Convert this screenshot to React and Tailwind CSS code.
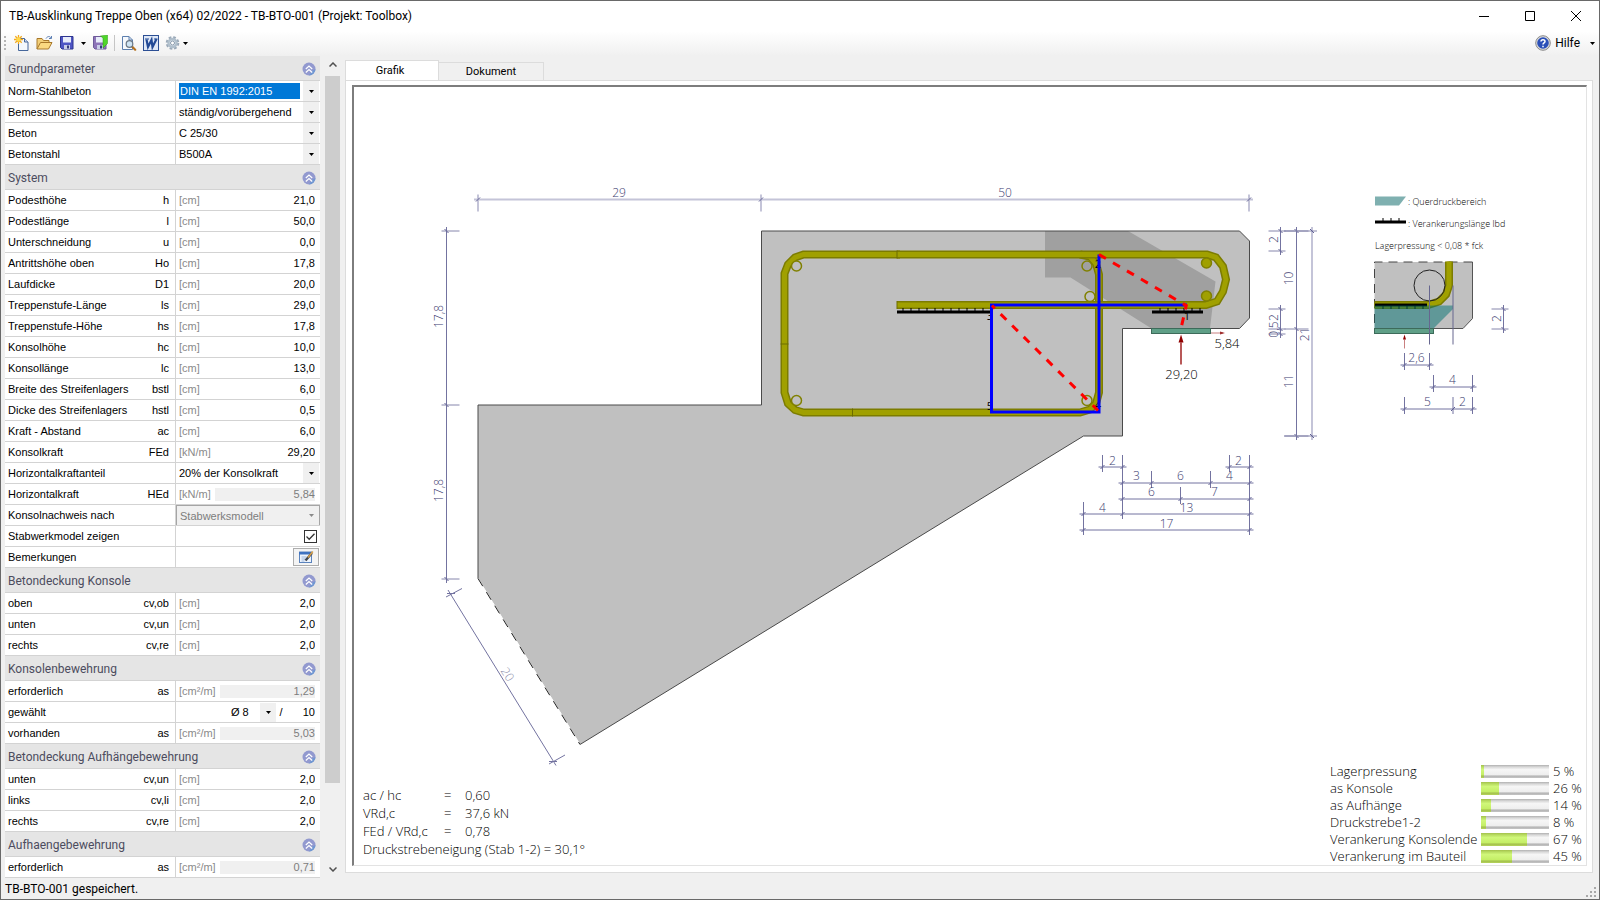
import { useState } from "react";

const sections = [
  {
    title: "Grundparameter",
    rows: [
      { label: "Norm-Stahlbeton", select: "DIN EN 1992:2015", active: true },
      { label: "Bemessungssituation", select: "ständig/vorübergehend" },
      { label: "Beton", select: "C 25/30" },
      { label: "Betonstahl", select: "B500A" },
    ],
  },
  {
    title: "System",
    rows: [
      { label: "Podesthöhe", symbol: "h", unit: "[cm]", value: "21,0" },
      { label: "Podestlänge", symbol: "l", unit: "[cm]", value: "50,0" },
      { label: "Unterschneidung", symbol: "u", unit: "[cm]", value: "0,0" },
      { label: "Antrittshöhe oben", symbol: "Ho", unit: "[cm]", value: "17,8" },
      { label: "Laufdicke", symbol: "D1", unit: "[cm]", value: "20,0" },
      { label: "Treppenstufe-Länge", symbol: "ls", unit: "[cm]", value: "29,0" },
      { label: "Treppenstufe-Höhe", symbol: "hs", unit: "[cm]", value: "17,8" },
      { label: "Konsolhöhe", symbol: "hc", unit: "[cm]", value: "10,0" },
      { label: "Konsollänge", symbol: "lc", unit: "[cm]", value: "13,0" },
      { label: "Breite des Streifenlagers", symbol: "bstl", unit: "[cm]", value: "6,0" },
      { label: "Dicke des Streifenlagers", symbol: "hstl", unit: "[cm]", value: "0,5" },
      { label: "Kraft - Abstand", symbol: "ac", unit: "[cm]", value: "6,0" },
      { label: "Konsolkraft", symbol: "FEd", unit: "[kN/m]", value: "29,20" },
      { label: "Horizontalkraftanteil", select: "20% der Konsolkraft" },
      { label: "Horizontalkraft", symbol: "HEd", unit: "[kN/m]", value: "5,84", readOnly: true },
      { label: "Konsolnachweis nach", select: "Stabwerksmodell", disabled: true },
      { label: "Stabwerkmodel zeigen", checkbox: true },
      { label: "Bemerkungen", note: true },
    ],
  },
  {
    title: "Betondeckung Konsole",
    rows: [
      { label: "oben", symbol: "cv,ob", unit: "[cm]", value: "2,0" },
      { label: "unten", symbol: "cv,un", unit: "[cm]", value: "2,0" },
      { label: "rechts", symbol: "cv,re", unit: "[cm]", value: "2,0" },
    ],
  },
  {
    title: "Konsolenbewehrung",
    rows: [
      { label: "erforderlich", symbol: "as", unit: "[cm²/m]", value: "1,29", readOnly: true },
      { label: "gewählt", diameter: "Ø 8", value: "10" },
      { label: "vorhanden", symbol: "as", unit: "[cm²/m]", value: "5,03", readOnly: true },
    ],
  },
  {
    title: "Betondeckung Aufhängebewehrung",
    rows: [
      { label: "unten", symbol: "cv,un", unit: "[cm]", value: "2,0" },
      { label: "links", symbol: "cv,li", unit: "[cm]", value: "2,0" },
      { label: "rechts", symbol: "cv,re", unit: "[cm]", value: "2,0" },
    ],
  },
  {
    title: "Aufhaengebewehrung",
    rows: [
      { label: "erforderlich", symbol: "as", unit: "[cm²/m]", value: "0,71", readOnly: true },
    ],
  },
];

const results = [
  ["ac / hc", "0,60"],
  ["VRd,c", "37,6 kN"],
  ["FEd / VRd,c", "0,78"],
];

const utilisation = [
  { label: "Lagerpressung", value: 5 },
  { label: "as Konsole", value: 26 },
  { label: "as Aufhänge", value: 14 },
  { label: "Druckstrebe1-2", value: 8 },
  { label: "Verankerung Konsolende", value: 67 },
  { label: "Verankerung im Bauteil", value: 45 },
];

function Caret({ className = "text-black" }) {
  return (
    <svg viewBox="0 0 5 3" className={`h-[3px] w-[5px] shrink-0 ${className}`} fill="currentColor">
      <path d="M0 0h5L2.500 3z" />
    </svg>
  );
}

function NewIcon() {
  return (
    <svg viewBox="0 0 16 16" className="size-4">
      <path d="M4.500 3.500h6l3.500 3.500v8.500H4.500z" fill="#f4f8fd" stroke="#46679b" />
      <path d="M10.500 3.500V7H14" fill="#cfdcf0" stroke="#46679b" />
      <path d="M4.500 0v9M0 4.500h9M1.300 1.300l6.400 6.400M7.700 1.300L1.300 7.700" stroke="#f2a81d" strokeWidth="1.300" />
      <circle cx="4.500" cy="4.500" r="2.200" fill="#ffd94a" />
    </svg>
  );
}

function OpenIcon() {
  return (
    <svg viewBox="0 0 17 16" className="h-4 w-[17px]">
      <path d="M1 14V3.500h5l1.500 2H13V8" fill="#f3cf78" stroke="#a8782a" />
      <path d="M1 14l3.500-6.500H16L12.500 14z" fill="#fbd981" stroke="#a8782a" strokeLinejoin="round" />
      <path d="M10 3.500c1.500-2.500 4-2.500 5-.5M15.500 1v2.500H13" fill="none" stroke="#5b7fb5" />
    </svg>
  );
}

function SaveIcon({ exit }) {
  return (
    <svg viewBox="0 0 16 16" className="size-4">
      <path
        d="M1.500 1.500h12.500v12.500H3l-1.500-1.500z"
        fill={exit ? "#8d74b8" : "#4e55c4"}
        stroke={exit ? "#6d5a9a" : "#2d348f"}
      />
      <path d="M4 2h8v5.500H4z" fill="#e8ecfa" />
      <path d="M5 10h6v4H5z" fill="#c9cde8" />
      <path d="M8 10.500h2v3H8z" fill="#333a7a" />
      {exit && <path d="M8.500 1L15.500 0v8.500L11 13V3z" fill="#4fd62a" stroke="#2f9a14" strokeWidth=".5" />}
    </svg>
  );
}

function PreviewIcon() {
  return (
    <svg viewBox="0 0 16 16" className="size-4">
      <path d="M1.500 1.500H8L11.500 5v9.500h-10z" fill="#f6f9fd" stroke="#5c7fae" />
      <path d="M8 1.500V5h3.500" fill="none" stroke="#5c7fae" />
      <path d="M11 11.500L14.200 14.700" stroke="#b3701e" strokeWidth="2.200" strokeLinecap="round" />
      <circle cx="8.500" cy="9" r="3.300" fill="#cfe5f5" stroke="#6b7886" strokeWidth="1.200" />
    </svg>
  );
}

function WordIcon() {
  return (
    <svg viewBox="0 0 16 16" className="size-4">
      <rect x=".5" y=".5" width="15" height="15" fill="#dfe8f7" stroke="#2c4f94" />
      <path d="M3.500 4.500L5 12l3.500-7L9.500 12 13.500 4" fill="none" stroke="#234a96" strokeWidth="2.200" />
      <path d="M2 4h4M11 4h3.500" stroke="#234a96" strokeWidth="1.200" />
    </svg>
  );
}

function GearIcon() {
  return (
    <svg viewBox="0 0 16 16" className="size-4">
      <circle cx="7.500" cy="8" r="5.600" fill="none" stroke="#9aa9b8" strokeWidth="2.400" strokeDasharray="2.600 1.800" />
      <circle cx="7.500" cy="8" r="4" fill="#e9f0f6" stroke="#b0bfcc" strokeWidth="2.400" />
      <circle cx="7.500" cy="8" r="2" fill="#fff" stroke="#8798aa" />
    </svg>
  );
}

function HelpIcon() {
  return (
    <svg viewBox="0 0 16 16" className="size-4">
      <circle cx="8" cy="8" r="7.300" fill="#dcdcdc" stroke="#8a8a8a" />
      <circle cx="8" cy="8" r="5.800" fill="#2b50b8" />
      <path
        d="M6 6.600c0-2.600 4-2.500 4-.2 0 1.400-2 1.500-2 3.100M8 10.800v1.400"
        fill="none"
        stroke="#fff"
        strokeWidth="1.500"
      />
    </svg>
  );
}

function CollapseIcon() {
  return (
    <svg viewBox="0 0 14 14" className="size-[14px]">
      <circle cx="7" cy="7" r="6.500" fill="#9299cf" />
      <path d="M7 13.500A6.500 6.500 0 0 0 13.500 7L10 9z" fill="#6f97d2" />
      <path d="M3.800 7L7 4l3.200 3M3.800 10.500L7 7.500l3.200 3" fill="none" stroke="#fff" strokeWidth="1.200" />
    </svg>
  );
}

function NoteIcon() {
  return (
    <svg viewBox="0 0 17 14" className="h-[14px] w-[17px]">
      <rect x="1.500" y="2" width="12" height="10.500" fill="#eef4fc" stroke="#5b83bd" />
      <path d="M1 2h13v2.500H1z" fill="#3f72c0" />
      <path d="M3.500 7h5M3.500 9h4M3.500 11h3" stroke="#9db7dc" />
      <path d="M7.500 10.500L14 3" stroke="#40464f" strokeWidth="2.400" />
      <path d="M10 7.500L14.800 1.500" stroke="#d7a04a" strokeWidth="1.600" />
    </svg>
  );
}

function ToolButton({ label, children }) {
  return (
    <button type="button" aria-label={label} className="flex items-center">
      {children}
    </button>
  );
}

function RowControl({ row, id }) {
  const [checked, setChecked] = useState(true);

  if (row.select) {
    return (
      <div
        className={`flex h-5 flex-1 items-center ${
          row.disabled ? "border border-[#a5a5a5] border-b-0 bg-[#f0f0f0] text-[#7d7d7d]" : ""
        }`}
      >
        <select
          id={id}
          disabled={row.disabled}
          className={`h-4 min-w-0 flex-1 appearance-none leading-4 outline-none ${
            row.active ? "mx-[3px] bg-[#0078d7] pl-px text-white" : "ml-[3px]"
          }`}
        >
          <option>{row.select}</option>
        </select>
        <span
          className={`flex w-4 items-center justify-center self-stretch ${row.disabled ? "" : "mr-px bg-[#f0f0f0]"}`}
        >
          <Caret className={row.disabled ? "text-[#8a8a8a]" : "text-black"} />
        </span>
      </div>
    );
  }
  if (row.checkbox) {
    return (
      <div className="flex flex-1 items-center justify-end pr-[3px]">
        <span className="grid">
          <input
            id={id}
            type="checkbox"
            checked={checked}
            onChange={(e) => setChecked(e.target.checked)}
            className="peer col-start-1 row-start-1 size-[13px] appearance-none border border-[#333] bg-white"
          />
          <svg
            viewBox="0 0 13 13"
            className="pointer-events-none invisible col-start-1 row-start-1 size-[13px] peer-checked:visible"
            fill="none"
            stroke="#333"
            strokeWidth="1.300"
          >
            <path d="M2.500 6.500l2.700 2.700L10.500 3.700" />
          </svg>
        </span>
      </div>
    );
  }
  if (row.note) {
    return (
      <div className="flex flex-1 items-center justify-end pr-px">
        <button
          id={id}
          type="button"
          aria-label="Bemerkungen"
          className="flex h-[18px] w-[26px] items-center justify-center border border-[#adadad] bg-[#f4f4f4]"
        >
          <NoteIcon />
        </button>
      </div>
    );
  }
  if (row.diameter) {
    return (
      <div className="flex flex-1 items-center justify-end">
        <select aria-label="Durchmesser" className="h-4 w-[29px] appearance-none leading-4 outline-none">
          <option>{row.diameter}</option>
        </select>
        <span className="flex h-[19px] w-4 items-center justify-center bg-[#f0f0f0]">
          <Caret />
        </span>
        <span className="w-[10px] text-center">/</span>
        <input id={id} defaultValue={row.value} className="w-[34px] pr-[5px] text-right outline-none" />
      </div>
    );
  }
  return (
    <div className="flex min-w-0 flex-1 items-center gap-1 pl-[3px] pr-[5px]">
      <span className="text-[#8a8a8a]">{row.unit}</span>
      <input
        id={id}
        size={4}
        defaultValue={row.value}
        readOnly={row.readOnly}
        className={`w-8 grow text-right leading-[13px] outline-none ${
          row.readOnly ? "bg-[#f0f0f0] text-[#7d7d7d]" : ""
        }`}
      />
    </div>
  );
}

function Section({ title, rows }) {
  return (
    <section>
      <div className="flex h-[25px] items-center justify-between border-b border-[#d3d3d3] bg-[#e5e5e5] pl-[3px] pr-1 pt-px">
        <h2 className="font-['Roboto',sans-serif] text-[12px] text-[#4c4c5e]">{title}</h2>
        <button type="button" aria-label={`${title} einklappen`}>
          <CollapseIcon />
        </button>
      </div>
      {rows.map((row) => {
        const id = `${title}-${row.label}`.replace(/\s/g, "-");
        return (
          <div key={row.label} className="flex h-[21px] border-b border-[#d3d3d3] bg-white">
            <label
              htmlFor={id}
              className="flex w-[171px] shrink-0 items-center justify-between border-r border-[#d3d3d3] pl-[3px] pr-[6px]"
            >
              <span>{row.label}</span>
              <span>{row.symbol}</span>
            </label>
            <RowControl row={row} id={id} />
          </div>
        );
      })}
    </section>
  );
}

// Dimension chain: `at` is the fixed coordinate, `stops` the measured points
function Chain({ vertical, at, stops, ext = [-5, 5], light }) {
  const first = stops[0] - 4;
  const last = stops[stops.length - 1] + 4;
  return (
    <g stroke={light ? "#c4c4d8" : "#7373a0"} strokeWidth={light ? 2 : 1}>
      {vertical ? <path d={`M${at} ${first}V${last}`} /> : <path d={`M${first} ${at}H${last}`} />}
      {stops.map((s) => (
        <g key={s}>
          {vertical ? (
            <path d={`M${at + ext[0]} ${s}H${at + ext[1]}`} stroke="#8686ac" strokeWidth="1" />
          ) : (
            <path d={`M${s} ${at + ext[0]}V${at + ext[1]}`} />
          )}
          {vertical ? (
            <path d={`M${at - 2} ${s - 2}l4 4`} stroke="#5f5f93" strokeWidth="1" />
          ) : (
            <path d={`M${s - 2} ${at + 2}l4 -4`} stroke="#5f5f93" strokeWidth="1" />
          )}
        </g>
      ))}
    </g>
  );
}

function DimText({ x, y, rotate = 0, children }) {
  return (
    <text
      transform={`translate(${x} ${y}) rotate(${rotate})`}
      textAnchor="middle"
      className="fill-[#3c3c70] text-[12px] font-light"
    >
      {children}
    </text>
  );
}

function Bar({ d }) {
  return (
    <g fill="none">
      <path d={d} stroke="#7c7c00" strokeWidth="8" />
      <path d={d} stroke="#a0a000" strokeWidth="5" />
    </g>
  );
}

function Comb({ x, y, width, start = 6, down }) {
  const ticks = [];
  for (let t = start; t < width; t += 8) ticks.push(x + t);
  return (
    <g stroke="#000">
      <path d={`M${x} ${y}h${width}`} strokeWidth="3" />
      {ticks.map((t) => (
        <path key={t} d={`M${t} ${y}v${down ? 4 : -4}`} />
      ))}
    </g>
  );
}

function MainSection() {
  return (
    <g>
      <path
        d="M761.500 231.500H1239.500L1249.500 241.500V318.500L1239.500 329H1122.500V436.500H1083.500L580 745L478 579V405.500H761.500z"
        fill="#c0c0c0"
      />
      <path d="M1045 231.500H1128L1215.500 282L1210 329H1151.500L1070.500 278H1045z" fill="#a0a0a0" />
      <path
        d="M478 579V405.500H761.500V231.500H1239.500L1249.500 241.500V318.500L1239.500 329H1122.500V436.500H1083.500L580 745"
        fill="none"
        stroke="#4a4a4a"
      />
      <path d="M478 579L580 745" stroke="#fff" />
      <path d="M478 579L580 745" stroke="#222" strokeDasharray="9 7" />

      {/* stirrup */}
      <Bar d="M1080 255L1090 257L1096 264L1099 275V393L1096 404L1090 410L1080 413H803.500L795 410.500L788 404L784.500 393V274L788 265L795 258L803.500 255H900" />
      <path d="M780.500 344.500h8M852.500 409v8" stroke="#6c6c00" />
      {/* hairpin */}
      <Bar d="M897 255H1207L1216 258L1223 267L1226 280L1223 292L1217 302L1206 305.500H897" />
      <path d="M897 251v8M897 301.500v8" stroke="#6c6c00" />

      <g fill="#c0c0c0" stroke="#808000" strokeWidth="1.500">
        <circle cx="796.500" cy="266.500" r="5" />
        <circle cx="796.500" cy="401" r="5" />
        <circle cx="1087" cy="266.500" r="5" fill="none" />
        <circle cx="1090" cy="297" r="5" fill="none" />
        <circle cx="1087" cy="401" r="5" />
        <circle cx="1206.500" cy="263.500" r="5" fill="#a0a000" />
        <circle cx="1206.500" cy="296.500" r="5" fill="#a0a000" />
      </g>

      <Comb x={897} y={312.500} width={95} />
      <Comb x={1152} y={312.500} width={51} start={8} />

      {/* bearing pad and loads */}
      <rect x="1151.500" y="329" width="59" height="5" fill="#5f9f87" stroke="#3d6b5a" />
      <path d="M1211 333.500h12" stroke="#c98080" />
      <path d="M1220 332l5 1.500l-5 1.500z" fill="#a03030" />
      <path d="M1181 365V343" stroke="#a02020" strokeWidth="1.500" />
      <path d="M1181 335l2.500 8h-5z" fill="#900000" />

      {/* strut-and-tie model */}
      <g className="text-[11px]" textAnchor="middle">
        <text x="1098" y="268">2</text>
        <text x="990" y="320">3</text>
        <text x="990" y="410">5</text>
        <text x="1098" y="409">4</text>
        <text x="1187" y="320">1</text>
      </g>
      <path d="M1187 305.500H991.500V412.500H1099V255" fill="none" stroke="#00f" strokeWidth="3" />
      <g stroke="#f00" strokeWidth="3" strokeDasharray="8 8.200">
        <path d="M1099 255L1187 306.500" />
        <path d="M1186.500 305L1181 329" strokeDashoffset="3" />
        <path d="M992 306L1098 411" strokeDashoffset="4" />
      </g>
      <g className="text-[13px] font-light" textAnchor="middle">
        <text x="1227" y="348">5,84</text>
        <text x="1181.500" y="379">29,20</text>
      </g>
    </g>
  );
}

function MainDimensions() {
  return (
    <g fill="none">
      <Chain at={200} stops={[478, 761, 1249]} ext={[-5, 12]} light />
      <DimText x={619} y={197}>29</DimText>
      <DimText x={1005} y={197}>50</DimText>

      <Chain vertical at={446.500} stops={[231.500, 405.500, 579.500]} ext={[-5, 13]} />
      <DimText x={443} y={317} rotate={-90}>17,8</DimText>
      <DimText x={443} y={491} rotate={-90}>17,8</DimText>

      <g stroke="#7373a0">
        <path d="M448 590.500L556 766" />
        <path d="M446 597.500L462 589M549 764.500L565 755.500" />
        <path d="M447 594h8M549 762h8" />
      </g>
      <g opacity=".6">
        <DimText x={504} y={677} rotate={58}>20</DimText>
      </g>

      <Chain vertical at={1280.500} stops={[231.500, 251.500]} ext={[-12, 5]} />
      <Chain vertical at={1280.500} stops={[309.500, 329.500, 334.500]} ext={[-12, 5]} />
      <Chain vertical at={1296.500} stops={[231.500, 329.500, 436.500]} ext={[-12, 12]} />
      <Chain vertical at={1312} stops={[231.500, 436.500]} ext={[-28, 5]} light />
      <DimText x={1278} y={240} rotate={-90}>2</DimText>
      <DimText x={1293} y={279} rotate={-90}>10</DimText>
      <DimText x={1278} y={330} rotate={-90}>0,5</DimText>
      <DimText x={1278} y={318} rotate={-90}>2</DimText>
      <DimText x={1293} y={382} rotate={-90}>11</DimText>
      <DimText x={1309} y={335} rotate={-90}>21</DimText>

      <Chain at={467.500} stops={[1102.500, 1122.500]} ext={[-12, 5]} />
      <Chain at={467.500} stops={[1229.500, 1249.500]} ext={[-12, 5]} />
      <Chain at={483.500} stops={[1122.500, 1151.500, 1210.500, 1249.500]} ext={[-12, 5]} />
      <Chain at={499.500} stops={[1122.500, 1180.500, 1249.500]} ext={[-12, 5]} />
      <Chain at={514.500} stops={[1083.500, 1122.500, 1249.500]} ext={[-12, 5]} />
      <Chain at={530.500} stops={[1083.500, 1249.500]} ext={[-12, 5]} />
      <DimText x={1112.500} y={465}>2</DimText>
      <DimText x={1238.500} y={465}>2</DimText>
      <DimText x={1136.500} y={480}>3</DimText>
      <DimText x={1180.500} y={480}>6</DimText>
      <DimText x={1229.500} y={480}>4</DimText>
      <DimText x={1151.500} y={496}>6</DimText>
      <DimText x={1214.500} y={496}>7</DimText>
      <DimText x={1102.500} y={512}>4</DimText>
      <DimText x={1186.500} y={512}>13</DimText>
      <DimText x={1166.500} y={528}>17</DimText>
    </g>
  );
}

function AnchorageDetail() {
  return (
    <g>
      <path d="M1375 197H1406L1399 206H1375z" fill="#7fb0b0" />
      <Comb x={1375} y={222.500} width={31} start={8} />
      <g className="text-[9px] font-light">
        <text x="1408" y="205">: Querdruckbereich</text>
        <text x="1408" y="227">: Verankerungslänge lbd</text>
        <text x="1375" y="249">Lagerpressung &lt; 0,08 * fck</text>
      </g>

      <path d="M1374.500 262.500H1472.500V319L1463 329H1374.500z" fill="#c0c0c0" />
      <path d="M1472.500 262.500V319L1463 329H1374.500" fill="none" stroke="#555" />
      <path d="M1472.500 262.500H1374.500V329" fill="none" stroke="#444" strokeDasharray="9 6" />
      <Bar d="M1449 262V286L1446 295L1439 302L1428 305.500H1374.500" />
      <circle cx="1429.500" cy="286" r="15.500" fill="none" stroke="#222" />
      <Comb x={1375} y={305.500} width={52} start={8} down />
      <path d="M1374.500 306H1453V309.500L1433.500 329H1374.500z" fill="#007070" opacity=".5" />
      <rect x="1374.500" y="329" width="59" height="5" fill="#5f9f87" stroke="#3d6b5a" />
      <path d="M1404.500 349V340" stroke="#c98080" />
      <path d="M1404.500 335l1.500 5h-3z" fill="#900000" />
      <path d="M1429.500 286v59M1453 286v59" stroke="#66668f" />

      <Chain vertical at={1503.500} stops={[309.500, 329.500]} ext={[-12, 5]} />
      <DimText x={1501} y={319} rotate={-90}>2</DimText>
      <Chain at={365.500} stops={[1404.500, 1429.500]} ext={[-12, 5]} />
      <DimText x={1416.500} y={362}>2,6</DimText>
      <Chain at={387.500} stops={[1433.500, 1472.500]} ext={[-12, 5]} />
      <DimText x={1452.500} y={384}>4</DimText>
      <Chain at={409.500} stops={[1404.500, 1453, 1472.500]} ext={[-12, 5]} />
      <DimText x={1427.500} y={406}>5</DimText>
      <DimText x={1462.500} y={406}>2</DimText>
    </g>
  );
}

function Utilisation({ label, value }) {
  return (
    <div className="flex h-[17px] items-center">
      <span className="w-[151px]">{label}</span>
      <div
        role="progressbar"
        aria-label={label}
        aria-valuenow={value}
        className="h-[13px] w-[68px] bg-[linear-gradient(#b0b0b0,#d8d8d8_15%,#f6f6f6_35%,#eeeeee_75%,#b4b4b4_85%,#c4c4c4)]"
      >
        <div
          className="h-full bg-[linear-gradient(#a3c04c,#b9dd62_15%,#d0f77a_35%,#c4ee66_75%,#a3c04c_85%,#b5d45c)]"
          style={{ width: `${value}%` }}
        />
      </div>
      <span className="w-[37px] pl-1">{value} %</span>
    </div>
  );
}

export default function App() {
  const [tab, setTab] = useState("Grafik");

  return (
    <div className="flex h-screen flex-col border border-[#696969] bg-[#f0f0f0] font-['Liberation_Sans',Arial,sans-serif] text-[11px] text-black">
      <header className="flex h-[30px] shrink-0 items-center justify-between bg-white pl-2">
        <h1 className="font-['Roboto',sans-serif] text-[12px]">
          TB-Ausklinkung Treppe Oben (x64) 02/2022 - TB-BTO-001 (Projekt: Toolbox)
        </h1>
        <div className="flex">
          <button type="button" aria-label="Minimieren" className="flex h-7 w-[46px] items-center justify-center">
            <svg viewBox="0 0 10 10" className="size-[10px]" stroke="#000"><path d="M0 5.500h10" /></svg>
          </button>
          <button type="button" aria-label="Maximieren" className="flex h-7 w-[46px] items-center justify-center">
            <svg viewBox="0 0 10 10" className="size-[10px]" stroke="#000" fill="none"><path d="M.5.500h9v9h-9z" /></svg>
          </button>
          <button type="button" aria-label="Schließen" className="flex h-7 w-[46px] items-center justify-center">
            <svg viewBox="0 0 10 10" className="size-[10px]" stroke="#000"><path d="M0 0l10 10M10 0L0 10" /></svg>
          </button>
        </div>
      </header>

      <div className="flex h-[25px] shrink-0 items-center bg-linear-to-b from-white to-[#f0f0f0] pb-px pl-[3px] pr-1">
        <svg viewBox="0 0 2 14" className="mr-2 h-[14px] w-[2px]" fill="#b5b5b5">
          <path d="M0 0h2v2H0zM0 4h2v2H0zM0 8h2v2H0zM0 12h2v2H0z" />
        </svg>
        <div className="flex items-center gap-[6px]">
          <ToolButton label="Neu"><NewIcon /></ToolButton>
          <ToolButton label="Öffnen"><OpenIcon /></ToolButton>
          <ToolButton label="Speichern"><SaveIcon /></ToolButton>
          <ToolButton label="Speichern unter"><Caret /></ToolButton>
          <ToolButton label="Speichern und schließen"><SaveIcon exit /></ToolButton>
          <span className="h-4 w-px bg-[#c5c5c5]" />
          <ToolButton label="Vorschau"><PreviewIcon /></ToolButton>
          <ToolButton label="Word"><WordIcon /></ToolButton>
          <ToolButton label="Einstellungen">
            <GearIcon />
            <span className="pl-[2px]"><Caret /></span>
          </ToolButton>
        </div>
        <button type="button" className="ml-auto flex items-center gap-1 font-['Roboto',sans-serif] text-[12px]">
          <HelpIcon />
          Hilfe
          <span className="pl-[6px]"><Caret /></span>
        </button>
      </div>

      <div className="flex min-h-0 flex-1">
        <aside className="ml-1 w-[315px] shrink-0 overflow-hidden">
          {sections.map((s) => (
            <Section key={s.title} {...s} />
          ))}
        </aside>

        <div className="ml-[5px] flex w-[15px] shrink-0 flex-col items-center">
          <button type="button" aria-label="Nach oben" className="flex h-5 w-full items-center justify-center pb-1">
            <svg viewBox="0 0 8 5" className="h-[5px] w-2" fill="none" stroke="#505050" strokeWidth="1.500"><path d="M.5 4.500L4 1l3.500 3.500" /></svg>
          </button>
          <div className="w-full flex-1">
            <div className="h-[90%] bg-[#cdcdcd]" />
          </div>
          <button type="button" aria-label="Nach unten" className="flex h-[17px] w-full items-center justify-center">
            <svg viewBox="0 0 8 5" className="h-[5px] w-2" fill="none" stroke="#505050" strokeWidth="1.500"><path d="M.5.500L4 4L7.500.500" /></svg>
          </button>
        </div>

        <main className="ml-[5px] mr-[6px] flex min-w-0 flex-1 flex-col pb-[5px] pt-1">
          <div className="flex h-5 shrink-0 items-end">
            {["Grafik", "Dokument"].map((name) => (
              <button
                key={name}
                type="button"
                onClick={() => setTab(name)}
                className={
                  tab === name
                    ? "-mb-px h-[21px] w-[94px] border border-b-0 border-[#dcdcdc] bg-white pr-1 font-['Roboto',sans-serif] text-[11px]"
                    : "h-[18px] w-[105px] border border-b-0 border-l-0 border-[#dcdcdc] pt-px font-['Roboto',sans-serif] text-[11px]"
                }
              >
                {name}
              </button>
            ))}
          </div>
          <div className="flex min-h-0 flex-1 border border-[#dcdcdc] bg-white pb-[6px] pl-[6px] pr-[5px] pt-1">
            <div className="flex min-w-0 flex-1 flex-col border-b border-l-2 border-r border-t-2 border-b-[#e3e3e3] border-l-[#7d7d7d] border-r-[#e3e3e3] border-t-[#7d7d7d] font-['Open_Sans',sans-serif]">
              <svg viewBox="354 88 1232 675" className="min-h-0 w-full flex-1 overflow-visible">
                <MainSection />
                <MainDimensions />
                <AnchorageDetail />
              </svg>
              <div className="flex shrink-0 items-end justify-between text-[13px] font-light">
                <div className="mb-[7px] pl-[9px] leading-[18px]">
                  <dl className="grid grid-cols-[81px_21px_auto] justify-start">
                    {results.map(([name, value]) => (
                      <div key={name} className="contents">
                        <dt>{name}</dt>
                        <dd>=</dd>
                        <dd>{value}</dd>
                      </div>
                    ))}
                  </dl>
                  <p>Druckstrebeneigung (Stab 1-2) = 30,1°</p>
                </div>
                <div>
                  {utilisation.map((u) => (
                    <Utilisation key={u.label} {...u} />
                  ))}
                </div>
              </div>
            </div>
          </div>
        </main>
      </div>

      <footer className="flex h-[21px] shrink-0 items-center justify-between pl-1 pr-[3px]">
        <p className="font-['Roboto',sans-serif] text-[12px]">TB-BTO-001 gespeichert.</p>
        <svg viewBox="0 0 10 10" className="mb-[-6px] size-[10px]" fill="#a8a8a8">
          <path d="M8 0h2v2H8zM4 4h2v2H4zM8 4h2v2H8zM0 8h2v2H0zM4 8h2v2H4zM8 8h2v2H8z" />
        </svg>
      </footer>
    </div>
  );
}
